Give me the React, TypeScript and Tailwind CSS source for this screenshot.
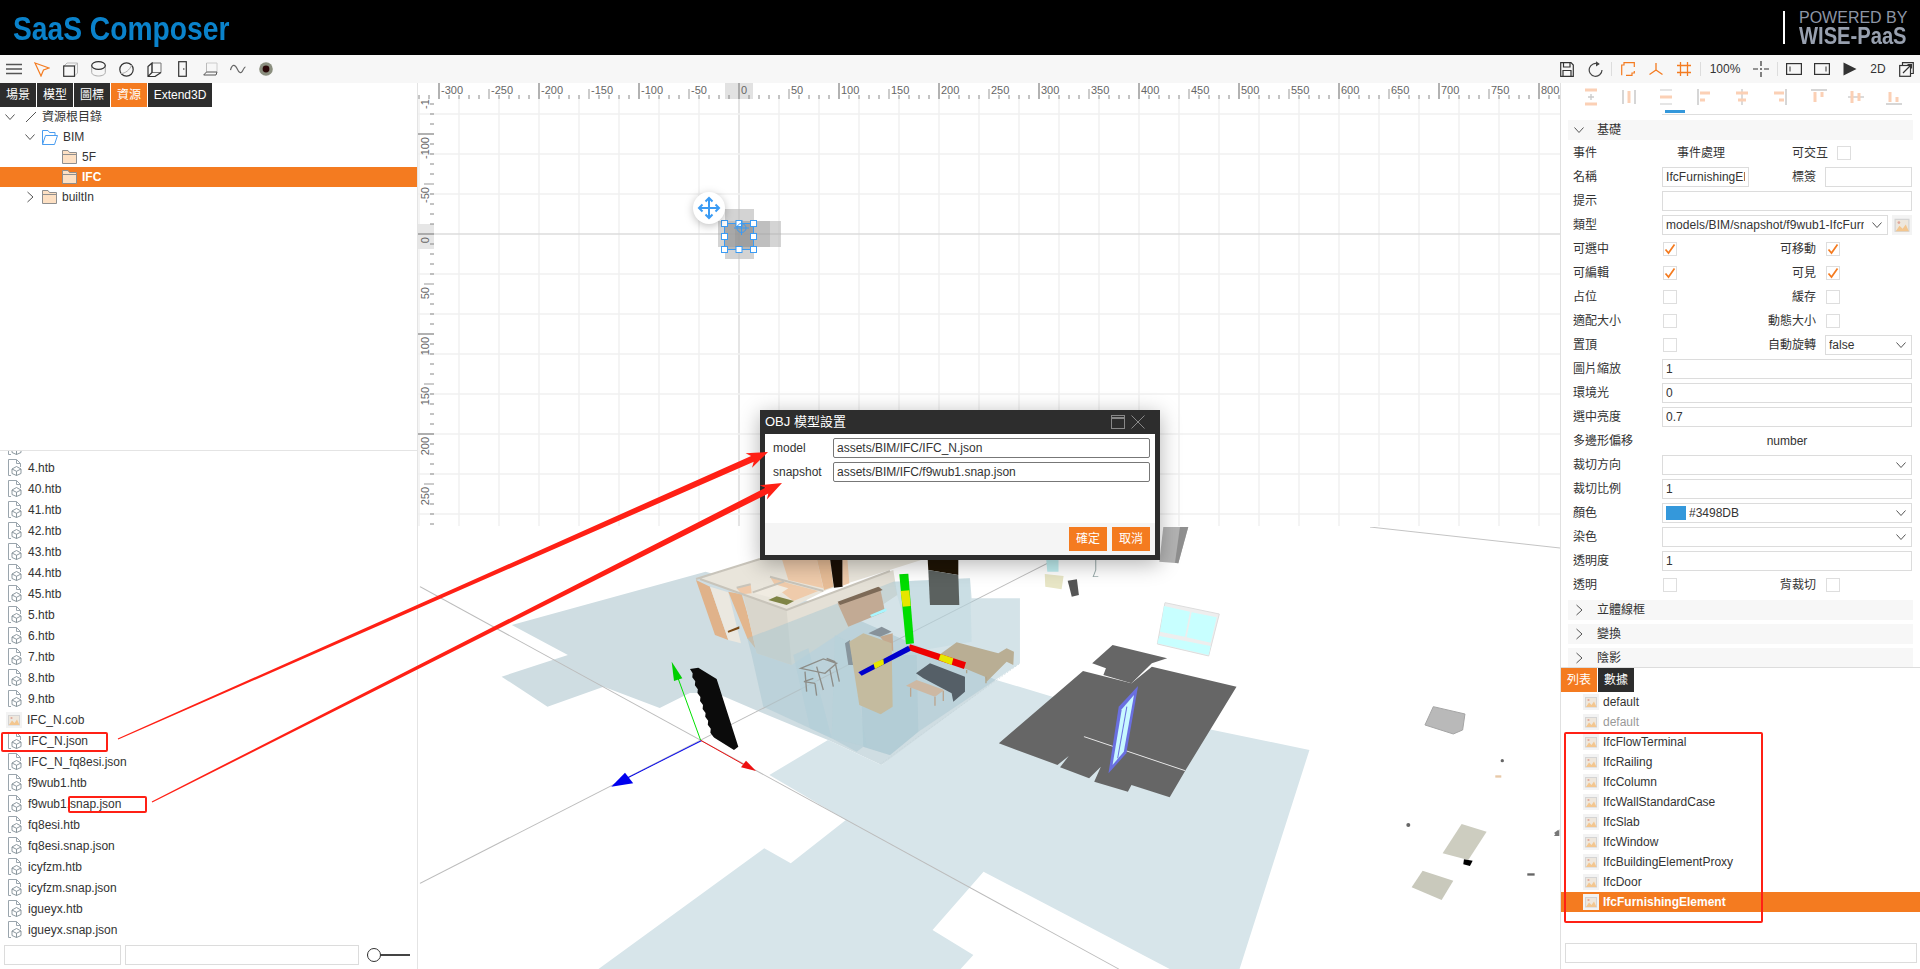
import React from "react";

const ORANGE = "#f47b20";

function Chevron({ dir = "down", color = "#555", size = 12 }: { dir?: "down" | "right"; color?: string; size?: number }) {
  return (
    <svg width={size} height={size} viewBox="0 0 12 12" className="shrink-0">
      {dir === "down" ? (
        <polyline points="1.5,3.5 6,8.5 10.5,3.5" fill="none" stroke={color} strokeWidth="1" />
      ) : (
        <polyline points="3.5,1 9,6 3.5,11" fill="none" stroke={color} strokeWidth="1" />
      )}
    </svg>
  );
}

function Folder({ open = false }: { open?: boolean }) {
  if (open)
    return (
      <svg width="16" height="15" viewBox="0 0 16 15" className="shrink-0">
        <path d="M0.5 14.5V0.5H6L7.5 2.5H13V5.5" fill="none" stroke="#4a9df0" />
        <path d="M0.5 14.5L3.5 5.5H15.5L12.5 14.5Z" fill="#fff" stroke="#4a9df0" />
      </svg>
    );
  return (
    <svg width="15" height="14" viewBox="0 0 15 14" className="shrink-0">
      <path d="M0.5 13.5V0.5H6L7.5 2.5H14.5V13.5Z" fill="#fde0c3" stroke="#8f8f8f" />
      <path d="M0.5 4.5H14.5" stroke="#8f8f8f" />
    </svg>
  );
}

function FileIcon() {
  return (
    <svg width="15" height="17" viewBox="0 0 15 17" className="shrink-0">
      <path d="M4 16.5H1.5V0.5H9.5L13.5 4.5V8" fill="none" stroke="#9aa5ad" />
      <path d="M9.5 0.5V4.5H13.5" fill="none" stroke="#9aa5ad" />
      <path d="M9.5 7.5L14 10V14.5L9.5 16.5L5 14.5V10Z M5 10L9.5 12.3L14 10 M9.5 12.3V16.5" fill="#fff" stroke="#7f8c94" strokeWidth="0.9" />
    </svg>
  );
}

function ImageGlyph() {
  return (
    <>
      <rect width="16" height="16" fill="#f3f3f3" />
      <rect x="2.5" y="3.5" width="11" height="9.5" fill="#eee7dd" stroke="#d4d4d4" />
      <path d="M3 13L6 8.5L8.5 11L11 7.5L13.5 13Z" fill="#f3c68f" />
      <circle cx="5.5" cy="6" r="1.1" fill="#e0a89b" />
    </>
  );
}

function ImageIcon() {
  return (
    <svg width="16" height="16" viewBox="0 0 16 16" className="shrink-0">
      <ImageGlyph />
    </svg>
  );
}

function Check({ on = false }: { on?: boolean }) {
  return (
    <span className="flex h-[14px] w-[14px] shrink-0 items-center justify-center border border-[#dedede] bg-white">
      {on && (
        <svg width="12" height="12" viewBox="0 0 12 12">
          <polyline points="1.5,6.5 4.5,10 10.5,1.5" fill="none" stroke={ORANGE} strokeWidth="1.7" />
        </svg>
      )}
    </span>
  );
}

function Field({ value = "", className = "", chevron = false, children }: { value?: string; className?: string; chevron?: boolean; children?: React.ReactNode }) {
  return (
    <div className={"flex h-5 items-center overflow-hidden border border-[#dcdcdc] bg-white pl-[3px] pr-[3px] text-[12px] text-[#333] " + className}>
      {children}
      <span className="flex-1 overflow-hidden whitespace-nowrap">{value}</span>
      {chevron && (
        <span className="ml-[7px] mr-[1px]">
          <Chevron />
        </span>
      )}
    </div>
  );
}

function Row({ label, children }: { label: string; children?: React.ReactNode }) {
  return (
    <div className="flex h-6 items-center text-[12px] text-[#333]">
      <div className="w-[94px] shrink-0 pl-[5px]">{label}</div>
      <div className="flex w-[250px] items-center">{children}</div>
    </div>
  );
}

function Pair({ left, label, right }: { left: React.ReactNode; label: string; right: React.ReactNode }) {
  return (
    <>
      {left}
      <div className="flex-1" />
      <span className="mr-[9px]">{label}</span>
      <div className="flex w-[87px]">{right}</div>
    </>
  );
}

function Section({ label, open = false }: { label: string; open?: boolean }) {
  return (
    <div className="mb-1 flex h-5 items-center bg-[#f7f7f7] pl-[5px] text-[12px] text-[#333]">
      <Chevron dir={open ? "down" : "right"} />
      <span className="ml-[12px]">{label}</span>
    </div>
  );
}

function Tab({ label, active = false, className = "w-9" }: { label: string; active?: boolean; className?: string }) {
  return (
    <div className={"mr-px flex h-6 items-center justify-center text-[12px] text-white " + (active ? "bg-[#f47b20] " : "bg-[#2d2d2d] ") + className}>
      {label}
    </div>
  );
}

function Tool({ children, className = "w-7" }: { children: React.ReactNode; className?: string }) {
  return <div className={"flex h-7 shrink-0 items-center justify-center " + className}>{children}</div>;
}

function Sep() {
  return (
    <div className="flex h-7 w-[5px] shrink-0 items-center justify-center">
      <div className="h-[14px] w-px bg-[#ddd]" />
    </div>
  );
}

const S = { fill: "none", stroke: "#333", strokeWidth: 1.2 };

function LeftToolbar() {
  return (
    <div className="flex">
      <Tool>
        <svg width="16" height="12" viewBox="0 0 16 12"><path d="M0 1.5H16M0 6H16M0 10.5H16" stroke="#555" strokeWidth="1.4" /></svg>
      </Tool>
      <Tool>
        <svg width="16" height="16" viewBox="0 0 16 16"><path d="M1 2L15 7L9.5 9L7 15Z" fill="none" stroke={ORANGE} strokeWidth="1.2" /></svg>
      </Tool>
      <Tool>
        <svg width="15" height="15" viewBox="0 0 15 15"><path d="M1 4L4 1H14.5V11L11.5 14" fill="none" stroke="#bbb" /><path d="M11.5 4L14.5 1" stroke="#bbb" /><rect x="0.7" y="4" width="10.8" height="10.3" {...S} /></svg>
      </Tool>
      <Tool>
        <svg width="15" height="16" viewBox="0 0 15 16"><path d="M0.7 4V11.5C0.7 13.5 4 15 7.5 15S14.3 13.5 14.3 11.5V4" fill="none" stroke="#aaa" /><ellipse cx="7.5" cy="4.5" rx="6.8" ry="3.8" {...S} /></svg>
      </Tool>
      <Tool>
        <svg width="15" height="15" viewBox="0 0 15 15"><circle cx="7.5" cy="7.5" r="6.7" {...S} /><path d="M2 11.5C6 11.5 11 8 12.5 3" fill="none" stroke="#aaa" /></svg>
      </Tool>
      <Tool>
        <svg width="15" height="15" viewBox="0 0 15 15"><path d="M5 1H14V10.5H5Z" fill="none" stroke="#777" /><path d="M1 4.5L5 1V10.5L1 14.5Z M1 14.5H8L14 10.5" {...S} /></svg>
      </Tool>
      <Tool>
        <svg width="9" height="16" viewBox="0 0 9 16"><rect x="0.7" y="0.7" width="7.6" height="14.6" {...S} /><circle cx="5.8" cy="8" r="0.8" fill="#333" /></svg>
      </Tool>
      <Tool>
        <svg width="15" height="14" viewBox="0 0 15 14"><path d="M3.5 1H14V10" fill="none" stroke="#ccc" /><path d="M3.5 1V10" stroke="#bbb" /><path d="M3.5 10H14L13 13H0.7Z" fill="none" stroke="#555" /></svg>
      </Tool>
      <Tool>
        <svg width="16" height="10" viewBox="0 0 16 10"><path d="M0.5 6C2 0 5 0 7 4.5S11 10 12.5 7S14.5 3 15.5 3" fill="none" stroke="#666" strokeWidth="1.2" /></svg>
      </Tool>
      <Tool>
        <svg width="14" height="14" viewBox="0 0 14 14"><circle cx="7" cy="7" r="6.8" fill="#8b8f7f" /><circle cx="7" cy="7" r="3.4" fill="#2a0808" /></svg>
      </Tool>
    </div>
  );
}

function RightToolbar() {
  return (
    <div className="flex items-center">
      <Tool>
        <svg width="14" height="15" viewBox="0 0 14 15"><path d="M0.7 0.7H11L13.3 3V14.3H0.7Z" {...S} /><path d="M3.5 0.7V5H10V0.7M3 14.3V8.5H11V14.3" {...S} /></svg>
      </Tool>
      <Tool>
        <svg width="15" height="16" viewBox="0 0 15 16"><path d="M10.5 3.2A6.4 6.4 0 1 0 14 9" fill="none" stroke="#444" strokeWidth="1.2" /><path d="M8 0.3L11.8 3L8 5.5Z" fill="#444" /></svg>
      </Tool>
      <Sep />
      <Tool>
        <svg width="14" height="14" viewBox="0 0 14 14"><path d="M0.7 13.3V3H3V0.7H13.3V5M13.3 9V11H11V13.3H5" fill="none" stroke={ORANGE} strokeWidth="1.2" /></svg>
      </Tool>
      <Tool>
        <svg width="14" height="13" viewBox="0 0 14 13"><path d="M7 0V7M7 7L0.5 11.5M7 7L13.5 11.5" fill="none" stroke={ORANGE} strokeWidth="1.3" /></svg>
      </Tool>
      <Tool>
        <svg width="14" height="14" viewBox="0 0 14 14"><path d="M3.5 0V14M10.5 0V14M0 3.5H14M0 10.5H14" fill="none" stroke={ORANGE} strokeWidth="1.3" /></svg>
      </Tool>
      <Sep />
      <div className="flex h-7 w-11 shrink-0 items-center justify-center text-[12px] text-[#333]">100%</div>
      <Tool>
        <svg width="16" height="16" viewBox="0 0 16 16"><path d="M8 0V5M8 11V16M0 8H5M11 8H16" stroke="#333" strokeWidth="1.2" /><rect x="7.2" y="7.2" width="1.6" height="1.6" fill="#333" /></svg>
      </Tool>
      <Sep />
      <Tool>
        <svg width="16" height="12" viewBox="0 0 16 12"><rect x="0.6" y="0.6" width="14.8" height="10.8" {...S} /><path d="M4 3.5V8.5" stroke="#333" /></svg>
      </Tool>
      <Tool>
        <svg width="16" height="12" viewBox="0 0 16 12"><rect x="0.6" y="0.6" width="14.8" height="10.8" {...S} /><path d="M12 3.5V8.5" stroke="#333" /></svg>
      </Tool>
      <Tool>
        <svg width="14" height="14" viewBox="0 0 14 14"><path d="M0.5 0.5L13.5 7L0.5 13.5Z" fill="#333" /></svg>
      </Tool>
      <div className="flex h-7 w-7 shrink-0 items-center justify-center text-[12px] text-[#333]">2D</div>
      <Tool>
        <svg width="15" height="15" viewBox="0 0 15 15"><path d="M3.5 3.5V0.7H14.3V11.5H11.5" {...S} /><rect x="0.7" y="3.5" width="10.8" height="10.8" {...S} /><path d="M4 11L12.5 2.5M8.5 2.5H12.5V6.5" {...S} /></svg>
      </Tool>
    </div>
  );
}

const alignIcons = [
  <g key="0"><path d="M2 2H14M2 16H14" stroke="#fbd0b5" strokeWidth="3" /><path d="M8 6V12M5 9H11" stroke="#ccc" strokeWidth="1.4" /></g>,
  <g key="1"><path d="M2 2V16M14 2V16" stroke="#ccc" strokeWidth="1.6" /><path d="M8 3V15" stroke="#fbd0b5" strokeWidth="3" /></g>,
  <g key="2"><path d="M2 2H14M2 16H14" stroke="#ccc" strokeWidth="1.2" /><path d="M2 9H14" stroke="#fbd0b5" strokeWidth="3" /></g>,
  <g key="3"><path d="M2 1V17" stroke="#ccc" strokeWidth="1.6" /><path d="M4 5H14M4 12H9" stroke="#fbd0b5" strokeWidth="3" /></g>,
  <g key="4"><path d="M8 1V17" stroke="#ccc" strokeWidth="1.4" /><path d="M2 5H14M4 12H12" stroke="#fbd0b5" strokeWidth="3" /></g>,
  <g key="5"><path d="M14 1V17" stroke="#ccc" strokeWidth="1.6" /><path d="M2 5H12M7 12H12" stroke="#fbd0b5" strokeWidth="3" /></g>,
  <g key="6"><path d="M1 2H17" stroke="#ccc" strokeWidth="1.6" /><path d="M5 4V14M12 4V9" stroke="#fbd0b5" strokeWidth="3" /></g>,
  <g key="7"><path d="M1 9H17" stroke="#ccc" strokeWidth="1.4" /><path d="M5 3V15M12 5V13" stroke="#fbd0b5" strokeWidth="3" /></g>,
  <g key="8"><path d="M1 16H17" stroke="#ccc" strokeWidth="1.6" /><path d="M5 4V14M12 9V14" stroke="#fbd0b5" strokeWidth="3" /></g>,
];

function range(a: number, b: number, s: number) {
  const r: number[] = [];
  for (let v = a; v <= b; v += s) r.push(v);
  return r;
}

function Canvas2D() {
  const X0 = 739;
  const Y0 = 234;
  return (
    <svg width="1142" height="444" viewBox="418 83 1142 444" className="block" fontFamily="Liberation Sans, sans-serif">
      <rect x="418" y="83" width="1142" height="444" fill="#fff" />
      {range(-320, 820, 40).map((v) => (
        <line key={v} x1={X0 + v} x2={X0 + v} y1="99" y2="526" stroke={v === 0 ? "#dcdcdc" : "#f0f0f0"} strokeWidth="1.5" />
      ))}
      {range(-120, 280, 40).map((v) => (
        <line key={v} x1="418" x2="1560" y1={Y0 + v} y2={Y0 + v} stroke={v === 0 ? "#dcdcdc" : "#f0f0f0"} strokeWidth="1.5" />
      ))}
      <rect x="418" y="224" width="16" height="25" fill="#e6e6e6" />
      {range(-150, 290, 10).map((v) => {
        const major = v % 100 === 0;
        const half = v % 50 === 0;
        return (
          <g key={v}>
            <line x1={major ? 418 : half ? 424 : 430} x2="434" y1={Y0 + v} y2={Y0 + v} stroke={major || half ? "#999" : "#888"} strokeWidth={major ? 1.5 : 1} />
            {half && (
              <text transform={`translate(429 ${Y0 + v + 3}) rotate(-90)`} textAnchor="end" fontSize="11" fill="#666">
                {v}
              </text>
            )}
          </g>
        );
      })}
      <rect x="418" y="83" width="1142" height="16" fill="#fff" />
      <rect x="725" y="83" width="28" height="16" fill="#e2e2e2" />
      {range(-320, 820, 10).map((v) => {
        const major = v % 100 === 0;
        const half = v % 50 === 0;
        return (
          <g key={v}>
            <line x1={X0 + v} x2={X0 + v} y1={major ? 83 : half ? 89 : 95} y2="99" stroke={major || half ? "#999" : "#888"} strokeWidth={major ? 1.5 : 1} />
            {half && (
              <text x={X0 + v + 2} y="94" fontSize="11" fill="#666">
                {v}
              </text>
            )}
          </g>
        );
      })}
      <rect x="725" y="209" width="29" height="50" fill="#bbb" opacity="0.65" />
      <rect x="718" y="221" width="63" height="26" fill="#aaa" opacity="0.5" />
      <rect x="735" y="221" width="35" height="26" fill="#999" opacity="0.35" />
      <rect x="724.5" y="223.5" width="29" height="26" fill="rgba(120,120,120,.3)" stroke="#3a9bf4" />
      {[[724.5, 223.5], [739, 223.5], [753.5, 223.5], [724.5, 236.5], [753.5, 236.5], [724.5, 249.5], [739, 249.5], [753.5, 249.5]].map(([x, y], i) => (
        <rect key={i} x={x - 3} y={y - 3} width="6" height="6" fill="#fff" stroke="#3a9bf4" />
      ))}
      <circle cx="741.5" cy="228" r="4.5" fill="none" stroke="#3a9bf4" />
      <path d="M734 228H749M741.5 220V235" stroke="#3a9bf4" />
      <circle cx="709" cy="208" r="16" fill="#fff" style={{ filter: "drop-shadow(0 2px 4px rgba(0,0,0,.25))" }} />
      <path d="M709 198V218M699 208H719M705.5 201.5L709 198L712.5 201.5M705.5 214.5L709 218L712.5 214.5M702.5 204.5L699 208L702.5 211.5M715.5 204.5L719 208L715.5 211.5" fill="none" stroke="#3a9bf4" strokeWidth="2" />
    </svg>
  );
}

function sawStrip() {
  const pts: string[] = ["90,342", "115,338", "170,372", "235,575", "222,585", "163,548"];
  const n = 16;
  for (let i = 0; i <= n; i++) {
    const t = i / n;
    const x = 160 - 62 * t;
    const y = 545 - 190 * t;
    pts.push(`${x - (i % 2 === 0 ? 0 : 5)},${y}`);
  }
  return pts.join(" ");
}

function Scene3D() {
  return (
    <svg width="1142" height="442" viewBox="418 527 1142 442" className="block">
      <rect x="418" y="527" width="1142" height="442" fill="#fff" />
      <g transform="translate(420 520) scale(0.51 0.3333)">
        <polygon points="180,315 560,155 800,260 1130,480 1000,640 905,735 800,660 667,576 580,519 529,519 470,564 360,500 250,560 160,470 290,405" fill="#cfdde2" />
        <polygon points="685,765 800,660 905,735 1130,480 1240,530 1744,690 1607,1347 350,1347 675,985 727,1030 835,900" fill="#d7e5ea" />
        <polygon points="1105,1055 1470,1347 1060,1347 1085,1305 1005,1230" fill="#fff" />
        <line x1="0" y1="200" x2="1370" y2="1347" stroke="#bcbcbc" strokeWidth="2.5" />
        <line x1="0" y1="1090" x2="1230" y2="130" stroke="#bcbcbc" strokeWidth="2.5" />

        <polygon points="1300,453 1395,490 1435,440 1601,500 1501,751 1470,832 1395,795 1388,815 1322,785 1335,740 1312,775 1255,742 1272,708 1250,735 1135,670" fill="#666" />
        <polygon points="1358,375 1465,415 1435,430 1395,490 1340,465 1345,445 1318,430" fill="#666" />
        <line x1="1302" y1="650" x2="1500" y2="752" stroke="#eee" strokeWidth="2.5" />
        <polygon points="1370,560 1408,498 1385,700 1350,760" fill="#6a6fe0" />
        <polygon points="1376,568 1400,525 1380,695 1358,735" fill="#c8f8ff" />
        <line x1="1386" y1="560" x2="1368" y2="715" stroke="#6a6fe0" strokeWidth="2" />

        <polygon points="1228,120 1252,120 1252,155 1230,155" fill="#bfeef0" />
        <polygon points="1225,162 1262,168 1258,208 1226,200" fill="#e8e6c6" />
        <polygon points="1270,182 1288,178 1292,225 1278,230" fill="#555" />
        <path d="M1325 120V150L1320 170H1330" fill="none" stroke="#9aa" strokeWidth="2" />
        <line x1="552" y1="662" x2="405" y2="775" stroke="#0000ee" strokeWidth="2.5" />
        <polygon points="375,800 402,758 418,790" fill="#0000ee" />
      </g>

      <g transform="translate(660 555) scale(0.3333)">
        <polygon points="120,72 300,10 800,10 500,105 380,165 250,120" fill="#e9e5db" />
        <polygon points="365,10 470,10 490,100 385,75" fill="#efcbab" />
        <polygon points="470,10 510,10 520,95 492,105" fill="#e6bc96" />
        <polygon points="510,10 548,10 548,95 522,98" fill="#1a0f05" />
        <polygon points="548,10 562,10 568,85 548,92" fill="#efcbab" />
        <polygon points="230,100 272,88 275,115 245,118" fill="#efc8a8" />
        <polygon points="330,65 385,85 475,108 400,138 350,100" fill="#efcbab" />
        <polygon points="285,115 345,88 385,100 340,130" fill="#f0ebe1" />
        <polygon points="325,135 350,124 402,138 380,150" fill="#7f8445" />
        <path d="M230 98L272 88M278 112L372 80M330 65L490 108" stroke="#c8c4ba" strokeWidth="6" fill="none" />
        <polygon points="108,75 150,95 205,255 165,240" fill="#e0b28a" />
        <polygon points="150,95 205,112 243,265 205,255" fill="#ebe8e0" />
        <polygon points="205,110 245,118 298,295 262,250" fill="#e3b68d" />
        <polygon points="203,228 238,214 238,221 205,233" fill="#7a4a17" />
        <polygon points="250,120 380,165 700,45 712,120 395,330 290,295" fill="#e4e0d6" />
        <polygon points="250,120 380,165 395,330 290,295" fill="#d9d6cc" />
        <path d="M108 72L300 12M120 72L380 165L690 48" stroke="#c8c4ba" strokeWidth="6" fill="none" />

        <polygon points="262,250 700,80 930,70 935,130 1080,130 1080,325 775,530 690,600 610,575 590,590 515,550 450,520 310,455 275,300" fill="#a9c8d2" opacity="0.5" />
        <polygon points="700,80 930,70 935,260 760,290" fill="#bcd6de" opacity="0.4" />
        <polygon points="803,10 895,10 895,60 805,45" fill="#1f1405" />
        <polygon points="805,45 895,60 898,150 810,150" fill="#5b615f" />
        <polygon points="400,300 445,280 515,550 450,520" fill="#b2cfd8" opacity="0.6" />
        <polygon points="525,240 565,260 620,575 515,550" fill="#b6d2da" opacity="0.5" />
        <polygon points="600,300 770,300 775,530 690,600 610,575" fill="#a9c8d2" opacity="0.5" />
        <path d="M660 628L1080 325" stroke="#c4d4da" strokeWidth="2" strokeDasharray="5 5" />

        <polygon points="533,145 660,97 675,170 565,215" fill="#c2aa94" />
        <polygon points="533,140 655,95 668,105 540,150" fill="#7d6a57" />
        <polygon points="630,180 678,160 680,168 635,186" fill="#a8f6ff" />
        <polygon points="555,265 570,255 580,330 565,330" fill="#87959d" />
        <polygon points="660,245 698,235 700,290 680,270" fill="#c4a98f" />
        <polygon points="625,235 665,215 695,230 660,245" fill="#87929a" />
        <polygon points="568,260 610,235 695,265 698,455 662,478 598,450" fill="#c4bb9f" />

        <polygon points="830,305 890,262 1015,295 1040,280 1062,290 1060,330 1040,320 980,380 975,365" fill="#b9ae94" />
        <path d="M978 365V385M920 345V355" stroke="#b0a58c" strokeWidth="4" />
        <polygon points="768,355 810,325 915,365 915,410 880,440 875,415 790,370" fill="#555f67" />
        <polygon points="738,392 770,375 853,405 825,425" fill="#cdb8a3" />
        <path d="M752 398V425M825 425V452M850 408V438" stroke="#bba58f" strokeWidth="4" />
        <path d="M422 340L490 312L530 325L495 355ZM435 350L440 410M470 335L490 405M510 345L520 395M525 320L538 380M460 370L432 380L465 385M500 310L525 320M465 385L470 422" fill="none" stroke="#8d8d88" strokeWidth="4" />

        <polygon points="718,58 745,56 762,265 738,268" fill="#00dd00" />
        <polygon points="722,108 748,106 752,153 728,155" fill="#e6e600" />
        <polygon points="750,268 918,322 912,342 745,285" fill="#ee0000" />
        <polygon points="842,297 880,310 875,330 836,315" fill="#e6e600" />
        <polygon points="745,272 752,287 605,362 595,352" fill="#0000cc" />
        <polygon points="640,325 670,312 672,328 645,342" fill="#e6e600" />

        <polygon points={sawStrip()} fill="#0b0b0b" />
        <line x1="122" y1="556" x2="55" y2="372" stroke="#00e000" strokeWidth="3" />
        <polygon points="35,320 67,370 42,378" fill="#00d000" />
        <line x1="122" y1="556" x2="250" y2="628" stroke="#ee1010" strokeWidth="3" />
        <polygon points="288,648 243,637 258,617" fill="#ee1010" />
      </g>

      <g transform="translate(1100 520) scale(0.3333)">
        <polygon points="190,20 265,20 235,130 178,125" fill="#b3b3b3" />
        <polygon points="240,20 265,20 235,130 225,128" fill="#8f8f8f" />
        <polygon points="195,248 358,282 326,408 172,372" fill="#eee" stroke="#ddd" strokeWidth="3" />
        <polygon points="192,258 270,275 255,350 180,335" fill="#c8ffff" />
        <polygon points="275,277 350,292 332,368 260,352" fill="#c8ffff" />
        <polygon points="178,348 332,378 326,405 172,370" fill="#c8ffff" />
        <polygon points="1000,560 1095,582 1088,630 1060,642 975,615" fill="#b9b9b9" stroke="#a5a5a5" strokeWidth="3" />
        <polygon points="1085,912 1160,935 1105,1020 1028,1000" fill="#cdcdc0" />
        <polygon points="968,1052 1060,1082 1025,1140 935,1102" fill="#c9c9bc" />
        <polygon points="1092,1018 1118,1022 1110,1038 1090,1033" fill="#000" />
        <circle cx="1207" cy="722" r="5" fill="#666" />
        <circle cx="925" cy="915" r="6" fill="#666" />
        <rect x="1186" y="766" width="18" height="7" fill="#e8c9a8" />
        <rect x="1282" y="1060" width="22" height="7" fill="#666" />
        <polygon points="1378,928 1378,948 1362,948" fill="#777" />
      </g>
      <line x1="418" y1="526.5" x2="1560" y2="526.5" stroke="#e6e6e6" />
      <line x1="1370" y1="527" x2="1560" y2="548" stroke="#c4c4c4" />
    </svg>
  );
}

function arrow(x1: number, y1: number, x2: number, y2: number) {
  const dx = x2 - x1;
  const dy = y2 - y1;
  const len = Math.hypot(dx, dy);
  const ux = dx / len;
  const uy = dy / len;
  const nx = -uy;
  const ny = ux;
  const p = (along: number, side: number) => `${x1 + ux * along + nx * side},${y1 + uy * along + ny * side}`;
  const neck = len - 17;
  const back = len - 21;
  return [p(0, 0.6), p(neck, 3.2), p(back, 8), p(len, 0), p(back, -8), p(neck, -3.2), p(0, -0.6)].join(" ");
}

const files = ["", "4.htb", "40.htb", "41.htb", "42.htb", "43.htb", "44.htb", "45.htb", "5.htb", "6.htb", "7.htb", "8.htb", "9.htb", "IFC_N.cob", "IFC_N.json", "IFC_N_fq8esi.json", "f9wub1.htb", "f9wub1.snap.json", "fq8esi.htb", "fq8esi.snap.json", "icyfzm.htb", "icyfzm.snap.json", "igueyx.htb", "igueyx.snap.json"];
const listItems = ["default", "default", "IfcFlowTerminal", "IfcRailing", "IfcColumn", "IfcWallStandardCase", "IfcSlab", "IfcWindow", "IfcBuildingElementProxy", "IfcDoor", "IfcFurnishingElement"];

export default function App() {
  return (
    <div className="relative flex h-[969px] w-[1920px] flex-col overflow-hidden bg-white font-['Liberation_Sans','Noto_Sans_CJK_TC',sans-serif] text-[12px] text-[#333]">
      <header className="flex h-[55px] shrink-0 items-center justify-between bg-black">
        <div className="ml-[13px] w-[216px] origin-left scale-x-[0.83] whitespace-nowrap text-[34px] font-bold leading-none text-[#0a82cb]">SaaS Composer</div>
        <div className="mr-[14px] flex items-center">
          <div className="mr-[14px] h-[33px] w-[2px] bg-white" />
          <div className="flex w-[107px] flex-col whitespace-nowrap">
            <span className="text-[16px] leading-[16px] text-[#8d95a5]">POWERED BY</span>
            <span className="origin-left scale-x-[0.84] text-[24px] font-bold leading-[20px] text-[#98a0af]">WISE-PaaS</span>
          </div>
        </div>
      </header>

      <div className="flex h-7 shrink-0 items-center justify-between bg-[#f7f7f7]">
        <LeftToolbar />
        <RightToolbar />
      </div>

      <div className="flex min-h-0 flex-1">
        <aside className="flex w-[418px] shrink-0 flex-col border-r border-[#e4e4e4]">
          <div className="h-[368px] shrink-0 border-b border-[#e4e4e4]">
            <div className="flex">
              <Tab label="場景" />
              <Tab label="模型" />
              <Tab label="圖標" />
              <Tab label="資源" active />
              <Tab label="Extend3D" className="w-[64px]" />
            </div>
            <div className="flex h-5 items-center pl-[4px]">
              <Chevron />
              <svg width="12" height="12" viewBox="0 0 12 12" className="ml-[9px]"><line x1="1" y1="11" x2="11" y2="1" stroke="#555" /></svg>
              <span className="ml-[5px]">資源根目錄</span>
            </div>
            <div className="flex h-5 items-center pl-[24px]">
              <Chevron />
              <span className="ml-[6px]"><Folder open /></span>
              <span className="ml-[5px]">BIM</span>
            </div>
            <div className="flex h-5 items-center pl-[62px]">
              <Folder />
              <span className="ml-[5px]">5F</span>
            </div>
            <div className="flex h-5 items-center bg-[#f47b20] pl-[62px] font-bold text-white">
              <Folder />
              <span className="ml-[5px]">IFC</span>
            </div>
            <div className="flex h-5 items-center pl-[24px]">
              <Chevron dir="right" />
              <span className="ml-[6px]"><Folder /></span>
              <span className="ml-[5px]">builtIn</span>
            </div>
          </div>
          <div className="h-[491px] shrink-0 overflow-hidden">
            <div className="-mt-[15px] pl-[7px]">
              {files.map((f, i) => (
                <div key={i} className="flex h-[21px] items-center">
                  {f.endsWith(".cob") ? <span className="-ml-px mr-[5px]"><ImageIcon /></span> : <span className="mr-[6px]"><FileIcon /></span>}
                  {f && <span>{f}</span>}
                </div>
              ))}
            </div>
          </div>
          <div className="flex items-center pl-[4px] pt-[3px]">
            <div className="h-5 w-[117px] border border-[#dcdcdc]" />
            <div className="ml-[4px] h-5 w-[234px] border border-[#dcdcdc]" />
            <div className="relative ml-[8px] flex h-5 w-[43px] items-center">
              <div className="h-[2px] w-full bg-[#444]" />
              <div className="absolute left-0 h-[14px] w-[14px] rounded-full border border-[#333] bg-white" />
            </div>
          </div>
        </aside>

        <main className="flex min-w-0 flex-1 flex-col">
          <Canvas2D />
          <Scene3D />
        </main>

        <aside className="flex w-[360px] shrink-0 flex-col border-l border-[#e0e0e0]">
          <div className="h-[585px] shrink-0 overflow-hidden border-b border-[#ddd] pl-[7px] pr-[7px]">
            <div className="flex h-[27px] items-center pl-[5px]">
              {alignIcons.map((g, i) => (
                <div key={i} className="flex w-[39.5px] justify-center">
                  <svg width="18" height="18" viewBox="0 0 18 18">{g}</svg>
                </div>
              ))}
            </div>
            <div className="relative ml-[94px] mr-0 h-[5px] w-[250px] border-b border-[#dedede]">
              <div className="absolute left-[3px] top-0 h-[3px] w-5 bg-[#3498db]" />
            </div>
            <div className="mt-[5px]">
              <div className="flex h-5 items-center bg-[#f7f7f7] pl-[5px]">
                <Chevron />
                <span className="ml-[12px]">基礎</span>
              </div>
              <div className="mt-px">
                <Row label="事件">
                  <span className="ml-[15px]">事件處理</span>
                  <div className="flex-1" />
                  <span className="mr-[9px]">可交互</span>
                  <div className="flex w-[75px]"><Check /></div>
                </Row>
                <Row label="名稱">
                  <Pair left={<Field value="IfcFurnishingElement" className="w-[87px] tracking-[0.05px]" />} label="標簽" right={<Field className="w-full" />} />
                </Row>
                <Row label="提示"><Field className="w-full" /></Row>
                <Row label="類型">
                  <Field value="models/BIM/snapshot/f9wub1-IfcFurnishingElement" chevron className="w-[226px] tracking-[0.08px]" />
                  <span className="ml-1"><svg width="20" height="20" viewBox="0 0 16 16"><ImageGlyph /></svg></span>
                </Row>
                <Row label="可選中"><Pair left={<span className="ml-px"><Check on /></span>} label="可移動" right={<span className="ml-px"><Check on /></span>} /></Row>
                <Row label="可編輯"><Pair left={<span className="ml-px"><Check on /></span>} label="可見" right={<span className="ml-px"><Check on /></span>} /></Row>
                <Row label="占位"><Pair left={<span className="ml-px"><Check /></span>} label="緩存" right={<span className="ml-px"><Check /></span>} /></Row>
                <Row label="適配大小"><Pair left={<span className="ml-px"><Check /></span>} label="動態大小" right={<span className="ml-px"><Check /></span>} /></Row>
                <Row label="置頂"><Pair left={<span className="ml-px"><Check /></span>} label="自動旋轉" right={<Field value="false" chevron className="w-full" />} /></Row>
                <Row label="圖片縮放"><Field value="1" className="w-full" /></Row>
                <Row label="環境光"><Field value="0" className="w-full" /></Row>
                <Row label="選中亮度"><Field value="0.7" className="w-full" /></Row>
                <Row label="多邊形偏移"><div className="w-full text-center">number</div></Row>
                <Row label="裁切方向"><Field chevron className="w-full" /></Row>
                <Row label="裁切比例"><Field value="1" className="w-full" /></Row>
                <Row label="顏色">
                  <Field value="#3498DB" chevron className="w-full">
                    <span className="mr-[3px] h-[14px] w-5 shrink-0 bg-[#3498db]" />
                  </Field>
                </Row>
                <Row label="染色"><Field chevron className="w-full" /></Row>
                <Row label="透明度"><Field value="1" className="w-full" /></Row>
                <Row label="透明"><Pair left={<span className="ml-px"><Check /></span>} label="背裁切" right={<span className="ml-px"><Check /></span>} /></Row>
              </div>
              <div className="mt-[3px]">
                <Section label="立體線框" />
                <Section label="變換" />
                <Section label="陰影" />
              </div>
            </div>
          </div>
          <div className="flex">
            <Tab label="列表" active />
            <Tab label="數據" />
          </div>
          <div>
            {listItems.map((item, i) => (
              <div key={i} className={"flex h-5 items-center pl-[22px] " + (i === 10 ? "bg-[#f47b20] font-bold text-white" : i === 1 ? "text-[#999]" : "")}>
                <ImageIcon />
                <span className="ml-[4px]">{item}</span>
              </div>
            ))}
          </div>
          <div className="ml-[4px] mt-[31px] h-5 w-[352px] border border-[#dcdcdc]" />
        </aside>
      </div>

      {/* dialog */}
      <div className="absolute left-[760px] top-[410px] flex h-[150px] w-[400px] flex-col border-x-[5px] border-b-[5px] border-[#2d2d2d] bg-white shadow-[0_4px_20px_rgba(0,0,0,0.3)]">
        <div className="-mx-[5px] flex h-6 shrink-0 items-center justify-between bg-[#2d2d2d] pl-[5px] pr-[15px] text-[13px] text-white">
          <span>OBJ 模型設置</span>
          <div className="flex items-center gap-[6px]">
            <svg width="14" height="14" viewBox="0 0 14 14"><rect x="0.5" y="0.5" width="13" height="13" fill="none" stroke="#888" /><path d="M0.5 3H13.5" stroke="#888" strokeWidth="2" /></svg>
            <svg width="14" height="14" viewBox="0 0 14 14"><path d="M0.5 0.5L13.5 13.5M13.5 0.5L0.5 13.5" stroke="#888" /></svg>
          </div>
        </div>
        <div className="flex-1 pt-1">
          <div className="mb-1 flex h-5 items-center">
            <div className="w-[68px] shrink-0 pl-2">model</div>
            <div className="flex h-5 w-[317px] items-center rounded-[2px] border border-[#777] pl-[3px]">assets/BIM/IFC/IFC_N.json</div>
          </div>
          <div className="flex h-5 items-center">
            <div className="w-[68px] shrink-0 pl-2">snapshot</div>
            <div className="flex h-5 w-[317px] items-center rounded-[2px] border border-[#777] pl-[3px]">assets/BIM/IFC/f9wub1.snap.json</div>
          </div>
        </div>
        <div className="flex h-8 shrink-0 items-center justify-end gap-[5px] bg-[#f5f5f5] pr-[5px]">
          <button className="h-6 w-[38px] bg-[#f47b20] text-[12px] text-white">確定</button>
          <button className="h-6 w-[38px] bg-[#f47b20] text-[12px] text-white">取消</button>
        </div>
      </div>

      {/* annotations */}
      <div className="absolute left-[1px] top-[732px] h-[20px] w-[107px] rounded-[2px] border-2 border-[#ff2015]" />
      <div className="absolute left-[68px] top-[796px] h-[17px] w-[79px] rounded-[2px] border-2 border-[#ff2015]" />
      <div className="absolute left-[1564px] top-[732px] h-[191px] w-[199px] rounded-[2px] border-2 border-[#ff2015]" />
      <svg width="1920" height="969" className="pointer-events-none absolute left-0 top-0">
        <polygon points={arrow(118, 739, 768, 452)} fill="#ff2015" />
        <polygon points={arrow(152, 802, 782, 483)} fill="#ff2015" />
      </svg>
      <div className="absolute left-[1554px] top-[830px] h-0 w-0 border-y-[3px] border-r-[4px] border-y-transparent border-r-[#777]" />
    </div>
  );
}
